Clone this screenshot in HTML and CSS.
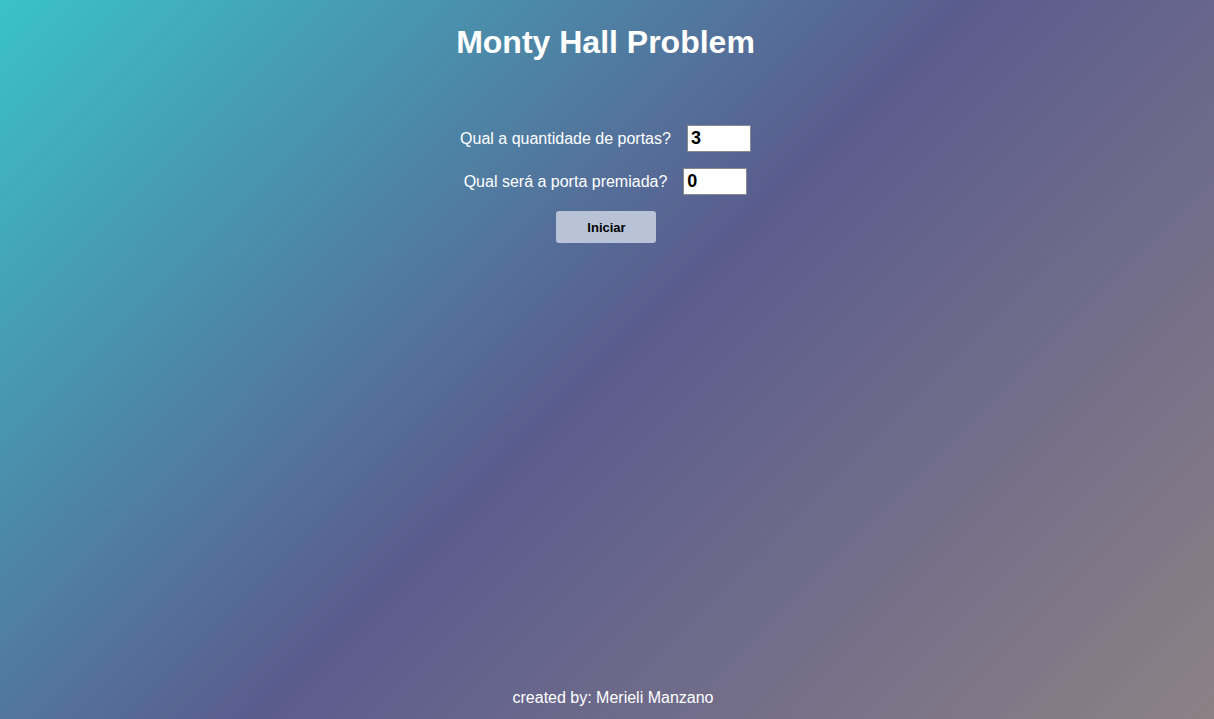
FILE: index.html
```html
<!DOCTYPE html>
<html lang="pt">
<head>
<meta charset="utf-8">
<title>Monty Hall Problem</title>
<link rel="stylesheet" href="styles.css">
</head>
<body>
<div class="page">
  <h1 class="title">Monty Hall Problem</h1>
  <form class="form">
    <div class="row">
      <label class="label" for="doors">Qual a quantidade de portas?</label>
      <input class="field" id="doors" type="text" value="3">
    </div>
    <div class="row">
      <label class="label" for="prize">Qual será a porta premiada?</label>
      <input class="field" id="prize" type="text" value="0">
    </div>
    <div class="actions">
      <button class="btn" type="button">Iniciar</button>
    </div>
  </form>
  <footer class="footer">created by: Merieli Manzano</footer>
</div>
</body>
</html>
```
FILE: styles.css
```css
html, body {
  margin: 0;
  padding: 0;
  height: 100%;
}
body {
  font-family: "Liberation Sans", Arial, sans-serif;
  color: #fff;
  background: linear-gradient(135deg, #3ac2c9 0%, #5a5c8e 50%, #8c8184 100%);
  background-attachment: fixed;
}
.page {
  height: 719px;
  display: flex;
  flex-direction: column;
  align-items: center;
  box-sizing: border-box;
  padding-right: 3px;
}
.title {
  margin: 24px 0 0;
  font-size: 32px;
  font-weight: bold;
  line-height: 37px;
}
.form {
  margin-top: 64px;
  display: flex;
  flex-direction: column;
  align-items: center;
}
.row {
  display: flex;
  align-items: center;
  gap: 16px;
  height: 27px;
  margin-bottom: 16px;
}
.label {
  font-size: 16px;
}
.field {
  width: 64px;
  height: 27px;
  box-sizing: border-box;
  border: 1px solid #8a8a8a;
  background: #fff;
  font-family: "Liberation Sans", Arial, sans-serif;
  font-size: 18px;
  font-weight: bold;
  color: #000;
  padding: 0 3px;
  outline: none;
}
.actions {
  padding-left: 2px;
}
.btn {
  width: 100px;
  height: 32px;
  border: none;
  border-radius: 3px;
  background: #b9c3d7;
  font-family: "Liberation Sans", Arial, sans-serif;
  font-size: 13px;
  font-weight: bold;
  color: #000;
  cursor: pointer;
}
.footer {
  margin-top: auto;
  margin-bottom: 12px;
  font-size: 16px;
  padding-left: 15px;
}
```
